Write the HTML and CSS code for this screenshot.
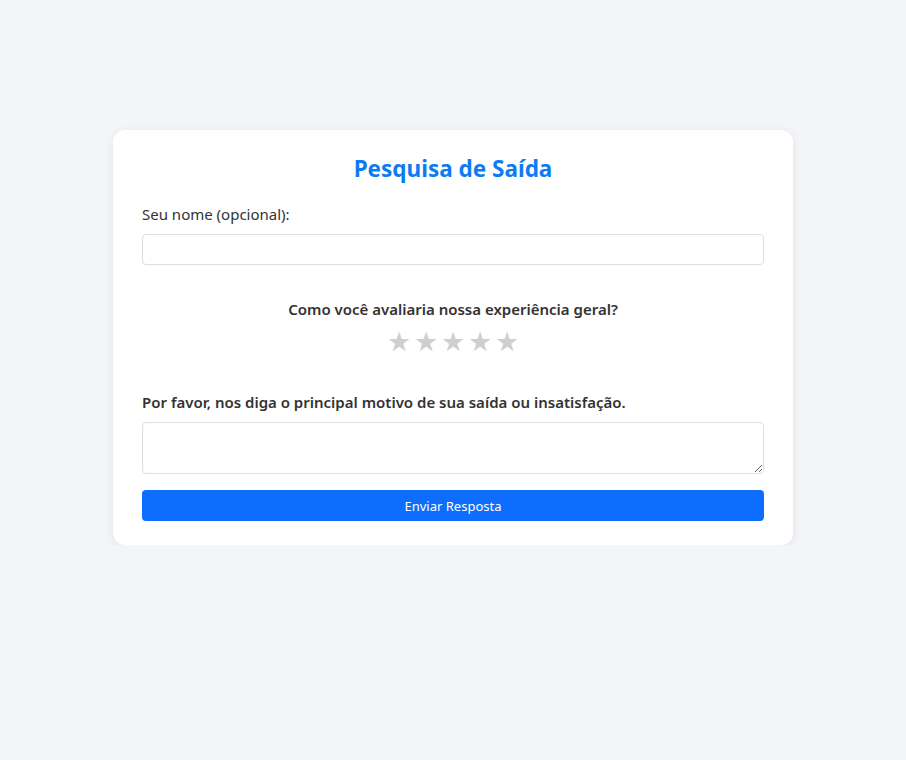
FILE: index.html
```html
<!DOCTYPE html>
<html lang="pt-BR">
<head>
<meta charset="utf-8">
<title>Pesquisa de Saída</title>
<link rel="stylesheet" href="styles.css">
</head>
<body>
<main class="page">
  <form class="card">
    <h1 class="title">Pesquisa de Saída</h1>
    <label class="label" for="nome">Seu nome (opcional):</label>
    <input class="input" id="nome" type="text">
    <div class="rating">
      <p class="question">Como você avaliaria nossa experiência geral?</p>
      <div class="stars"><span>★</span><span>★</span><span>★</span><span>★</span><span>★</span></div>
    </div>
    <label class="label strong" for="motivo">Por favor, nos diga o principal motivo de sua saída ou insatisfação.</label>
    <textarea class="textarea" id="motivo"></textarea>
    <button class="button" type="button">Enviar Resposta</button>
  </form>
</main>
</body>
</html>
```
FILE: styles.css
```css
* { box-sizing: border-box; }
html, body { margin: 0; padding: 0; }
body {
  background: #f4f5f9;
  font-family: "Noto Sans", "Open Sans", sans-serif;
  color: #333;
}
.page {
  display: flex;
  justify-content: center;
  padding-top: 130px;
}
.card {
  width: 680px;
  background: #fff;
  border-radius: 12px;
  box-shadow: 0 2px 10px rgba(0,0,0,0.08);
  padding: 24px 29px 24px;
  display: flex;
  flex-direction: column;
}
.title {
  margin: 0 0 20px;
  text-align: center;
  color: #0d7bf2;
  font-size: 22.5px;
  font-weight: 700;
  line-height: 30px;
}
.label {
  font-size: 15px;
  line-height: 20px;
  margin-bottom: 10px;
}
.label.strong { font-weight: 600; margin-top: 0; }
.input {
  height: 31px;
  border: 1px solid #dcdde2;
  border-radius: 4px;
  font: inherit;
  margin: 0;
}
.rating {
  text-align: center;
  margin: 33px 0 36px;
}
.question {
  margin: 0 0 6px;
  font-size: 15px;
  font-weight: 600;
  line-height: 22px;
}
.stars {
  display: flex;
  justify-content: center;
  gap: 3px;
  color: #cfcfcf;
  font-size: 27px;
  line-height: 30px;
}
.textarea {
  height: 52px;
  border: 1px solid #dcdde2;
  border-radius: 4px;
  font: inherit;
  margin: 0;
  resize: vertical;
}
.button {
  margin-top: 16px;
  height: 31px;
  background: #0d6efd;
  color: #fff;
  border: none;
  border-radius: 4px;
  font-family: inherit;
  font-size: 13px;
}
```
